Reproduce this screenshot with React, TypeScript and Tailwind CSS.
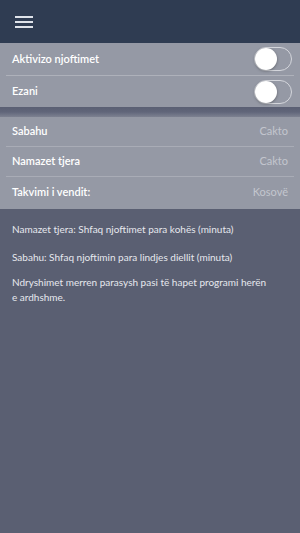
import React from "react";

function Toggle() {
  return (
    <div className="w-[38px] h-[24px] rounded-full border border-[#d4d6dc] bg-transparent relative flex items-center">
      <div className="w-[22px] h-[22px] rounded-full bg-white shadow-[0_1px_3px_rgba(0,0,0,0.35)]" />
    </div>
  );
}

function Row({ label, value, border }: { label: string; value: string; border?: boolean }) {
  return (
    <div className={"mx-[6px] h-[30px] flex items-center justify-between px-[6px] " + (border ? "border-b border-[#a9acb6]" : "")}>
      <span className="text-[11px] font-semibold text-white">{label}</span>
      <span className="text-[11px] text-[#c3c6ce]">{value}</span>
    </div>
  );
}

export default function App() {
  return (
    <div className="w-[300px] h-[533px] bg-[#5a5f72] flex flex-col" style={{ fontFamily: "Lato, 'Open Sans', sans-serif" }}>
      <div className="h-[43px] bg-[#2f3c52] flex items-center pl-[15px]">
        <div className="flex flex-col gap-[3px]">
          <div className="w-[18px] h-[2px] bg-[#dfe3ea]" />
          <div className="w-[18px] h-[2px] bg-[#dfe3ea]" />
          <div className="w-[18px] h-[2px] bg-[#dfe3ea]" />
        </div>
      </div>
      <div className="bg-[#9599a5]">
        <div className="mx-[6px] h-[33px] flex items-center justify-between pl-[6px] pr-[2px] border-b border-[#aeb1ba]">
          <span className="text-[11px] font-semibold text-white">Aktivizo njoftimet</span>
          <Toggle />
        </div>
        <div className="mx-[6px] h-[31px] flex items-center justify-between pl-[6px] pr-[2px]">
          <span className="text-[11px] font-semibold text-white">Ezani</span>
          <Toggle />
        </div>
      </div>
      <div className="h-[10px] bg-gradient-to-b from-[#5a5f73] via-[#61667a] to-[#7d8191]" />
      <div className="bg-[#9599a5] pb-[2px]">
        <Row label="Sabahu" value="Cakto" border />
        <Row label="Namazet tjera" value="Cakto" border />
        <Row label="Takvimi i vendit:" value="Kosovë" />
      </div>
      <div className="pl-[12px] pr-[31px] pt-[13px] text-[10px] text-[#e6e8ee] leading-[15px]">
        <p>Namazet tjera: Shfaq njoftimet para kohës (minuta)</p>
        <p className="mt-[13px]">Sabahu: Shfaq njoftimin para lindjes diellit (minuta)</p>
        <p className="mt-[10px]">Ndryshimet merren parasysh pasi të hapet programi herën e ardhshme.</p>
      </div>
    </div>
  );
}
